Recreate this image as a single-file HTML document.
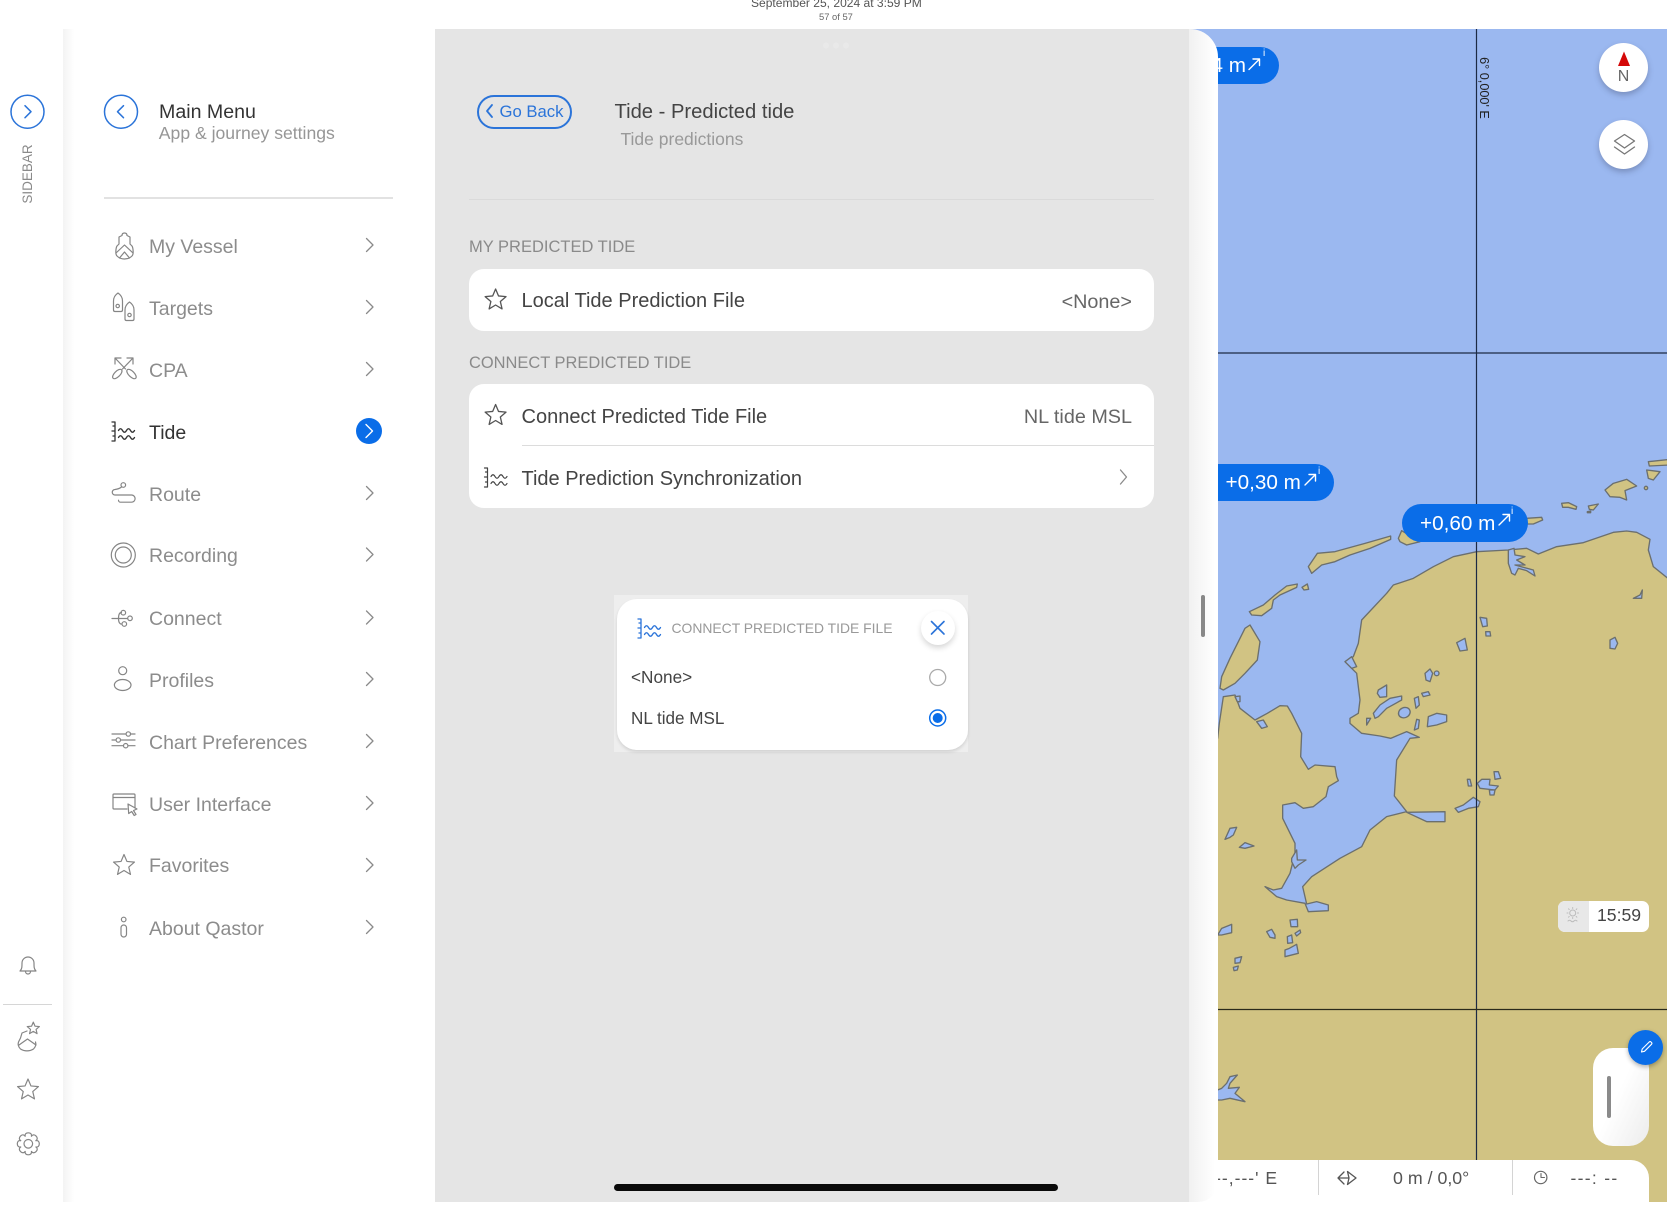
<!DOCTYPE html>
<html><head><meta charset="utf-8"><title>Tide - Predicted tide</title>
<style>
html,body{margin:0;padding:0;background:#fff}
body{position:relative;width:1667px;height:1205px;overflow:hidden;font-family:"Liberation Sans",sans-serif}
#page{position:absolute;left:0;top:0;width:1667px;height:1205px;overflow:hidden;filter:blur(.35px)}
div{box-sizing:border-box}
.a{position:absolute}
.t{position:absolute;white-space:nowrap;height:24px;line-height:24px}
.m{left:149px;font-size:19.5px;color:#8c8c8c}
.h{color:#444;font-size:20px;left:521.5px}
.s{font-size:16.5px;color:#8a8a8a;left:469px}
.v{font-size:19.8px;color:#666;right:535px}
.pill{position:absolute;background:#0a6de8;border-radius:19px;height:37.5px}
.pt{position:absolute;color:#fff;font-size:20.7px;white-space:nowrap;line-height:24px;height:24px}
.st{position:absolute;color:#555;font-size:17.5px;white-space:nowrap;line-height:24px;height:24px}
.pi{position:absolute;color:#fff;font-size:10px;line-height:10px}
</style></head><body><div id="page">

<div class="t" style="left:751px;top:-9px;font-size:12.05px;color:#555">September 25, 2024 at 3:59 PM</div>
<div class="t" style="left:819px;top:5px;font-size:9.4px;color:#666">57 of 57</div>

<!-- Sidebar shadow -->
<div class="a" style="left:63px;top:29px;width:11px;height:1173px;background:linear-gradient(90deg,#f3f3f3,#fff)"></div>

<div class="t" style="left:-3px;top:162px;width:62px;text-align:center;font-size:13.5px;color:#8a8a8a;transform:rotate(-90deg)">SIDEBAR</div>
<div class="a" style="left:3px;top:1003.5px;width:49px;height:1px;background:#d6d6d6"></div>

<!-- Menu -->
<div class="a" style="left:104px;top:197px;width:289px;height:1.5px;background:#e2e2e2"></div>
<div class="t" style="left:159px;top:100px;font-size:19.6px;color:#333">Main Menu</div>
<div class="t" style="left:158.8px;top:121px;font-size:17.6px;color:#969696">App &amp; journey settings</div>
<div class="t m" style="top:235px">My Vessel</div>
<div class="t m" style="top:297px">Targets</div>
<div class="t m" style="top:358.5px">CPA</div>
<div class="t m" style="top:420.5px;color:#333">Tide</div>
<div class="t m" style="top:482.5px">Route</div>
<div class="t m" style="top:544px">Recording</div>
<div class="t m" style="top:606.5px">Connect</div>
<div class="t m" style="top:668.5px">Profiles</div>
<div class="t m" style="top:730.5px">Chart Preferences</div>
<div class="t m" style="top:792.5px">User Interface</div>
<div class="t m" style="top:854px">Favorites</div>
<div class="t m" style="top:916.5px">About Qastor</div>

<!-- Map -->
<div class="a" style="left:1189px;top:29px;width:478px;height:1173px;overflow:hidden;background:#9bb8f0">
<svg class="a" style="left:-1189px;top:-29px" width="1667" height="1205" viewBox="0 0 1667 1205">
<g transform="translate(1180 500) scale(.33333)" stroke="#6b6f6e" stroke-width="4" stroke-linejoin="round">
<path fill="#d1c383" d="M0 720L113 715L118 670L130 590L165 585L180 625L225 660L262 640L300 617L322 618L335 640L365 700L362 770L385 808L405 795L465 800L470 830L475 842L445 860L438 890L400 920L370 925L345 908L308 915L308 955L345 1030L345 1060L330 1120L305 1165L280 1170L255 1160L290 1190L320 1200L375 1210L385 1235L445 1232L445 1215L410 1205L380 1212L368 1160L395 1130L480 1075L545 1040L570 990L620 950L680 935L643 888L650 780L690 715L718 712L680 695L632 715L600 708L545 700L510 670L510 655L535 640L540 600L530 520L495 485L520 470L535 430L545 360L620 280L640 255L700 235L760 200L820 170L890 155L985 150L1040 145L1075 162L1130 140L1210 128L1300 97L1340 93L1370 97L1410 118L1405 150L1420 200L1470 240L1470 2200L0 2200Z"/>
<path fill="#d1c383" d="M120 565L125 530L150 475L195 385L210 375L240 425L232 480L195 520L165 550L130 570Z"/>
<path fill="#d1c383" d="M208 335L250 315L285 285L320 258L352 252L350 262L300 285L280 300L275 325L245 347L215 345Z"/>
<path fill="#d1c383" d="M385 200L412 160L465 155L555 130L632 108L632 118L570 145L510 165L465 185L425 195L395 220Z"/>
<path fill="#d1c383" d="M366 262L382 252L386 268L372 270Z"/>
<path fill="#d1c383" d="M655 115L665 92L720 125L680 135L660 125Z"/>
<path fill="#d1c383" d="M1040 55L1085 52L1088 60L1060 72L1040 72Z"/>
<g fill="#9bb8f0">
<path d="M900 352L920 355L922 378L908 380Z"/><path d="M917 395L930 395L932 408L918 408Z"/>
<path d="M830 428L855 415L862 450L840 453Z"/><path d="M1290 420L1305 412L1313 430L1305 447L1290 445Z"/>
<path d="M1360 295L1380 285L1387 270L1385 295Z"/>
<path d="M735 520L750 507L758 520L750 545L738 540Z"/><circle cx="770" cy="520" r="7"/>
<path d="M595 570L620 555L620 590L600 592L592 580Z"/>
<path d="M580 640L600 615L630 595L665 588L665 600L620 625L595 650L585 655Z"/>
<ellipse cx="673" cy="638" rx="18" ry="15" transform="rotate(-25 673 638)"/>
<path d="M703 595L715 590L718 615L708 625Z"/><path d="M725 580L745 575L750 585L730 590Z"/>
<path d="M745 650L770 640L800 645L800 665L770 675L742 680Z"/><path d="M710 658L718 660L715 685L703 690Z"/>
<path d="M560 655L572 655L560 675Z"/>
<path d="M862 838L870 838L875 858L865 858Z"/><path d="M892 850L905 838L930 838L928 855L955 858L945 870L900 865Z"/>
<path d="M928 870L945 870L942 885L930 885Z"/><path d="M942 815L955 815L962 835L945 838Z"/>
<path d="M825 925L850 915L880 892L900 905L895 920L865 925L835 937Z"/>
<path d="M985 150L1002 145L1005 165L1035 170L1010 180L1035 195L1005 195L1060 210L1065 228L1040 212L1015 205L1005 225L995 220L985 190Z"/>
<path d="M495 485L515 470L530 500L515 505Z"/>
<path d="M680 937L795 935L795 965L740 965Z"/>
<path d="M230 665L250 660L262 680L245 685Z"/><path d="M165 590L180 588L180 605L172 605Z"/>
<path d="M135 1018L150 985L170 982L160 1005L150 1012Z"/><path d="M178 1042L195 1028L222 1038L195 1045Z"/>
<path d="M335 1075L350 1050L352 1080L378 1080L355 1095L345 1105L335 1085Z"/>
</g>
</g>
<g transform="translate(1180 880) scale(.33333)" stroke="#6b6f6e" stroke-width="4" stroke-linejoin="round" fill="#9bb8f0">
<path d="M113 165L125 145L155 133L155 158L125 165Z"/><path d="M260 155L275 148L285 165L285 175L270 172Z"/>
<path d="M330 120L352 118L353 140L333 140Z"/><path d="M345 160L360 150L362 158L350 168Z"/>
<path d="M322 170L335 165L338 188L323 190Z"/><path d="M315 210L328 205L350 193L355 220L315 230Z"/>
<path d="M165 235L185 230L180 248L165 250Z"/><path d="M160 262L175 258L172 270L162 272Z"/>
<path d="M100 635L125 625L140 610L150 590L172 585L150 610L145 625L178 622L165 640L195 665L150 655L125 660L100 660Z"/>
</g>
<g transform="translate(1180 20) scale(.33333)" stroke="#6b6f6e" stroke-width="4" stroke-linejoin="round" fill="#d1c383">
<path d="M1145 1450L1165 1448L1190 1460L1188 1468L1165 1462L1148 1462Z"/>
<path d="M1225 1458L1255 1452L1240 1470L1228 1468Z"/><path d="M1222 1475L1232 1473L1232 1478L1222 1478Z"/>
<path d="M1275 1410L1300 1390L1340 1378L1370 1398L1335 1412L1340 1440L1320 1432L1290 1430Z"/>
<circle cx="1398" cy="1404" r="5"/>
<path d="M1400 1350L1440 1355L1420 1380L1405 1375Z"/>
<path d="M1405 1325L1470 1318L1470 1335L1408 1338Z"/>
</g>
<g stroke="#1d2a44" stroke-width="1.2">
<path d="M1476.5 29V1160M1189 353H1667"/>
<path d="M1189 1009.5H1667" stroke="#2a2a1a"/>
</g>
</svg>
<div class="t" style="left:263.5px;top:47px;width:62px;text-align:center;font-size:12.7px;color:#222;transform:rotate(90deg)">6° 0,000' E</div>

<div class="pill" style="left:0;top:17.5px;width:90px"></div>
<div class="pt" style="right:421px;top:24.5px">4 m</div>
<div class="pi" style="left:74px;top:20px">i</div>
<div class="pill" style="left:0;top:434.5px;width:145px"></div>
<div class="pt" style="left:36.5px;top:441.5px">+0,30 m</div>
<div class="pi" style="left:129px;top:438px">i</div>
<div class="pill" style="left:213px;top:475px;width:126px"></div>
<div class="pt" style="left:231px;top:483px">+0,60 m</div>
<div class="pi" style="left:322px;top:478px">i</div>

<!-- compass / layers -->
<div class="a" style="left:410px;top:13.5px;width:49px;height:49px;border-radius:50%;background:#fff;box-shadow:0 3px 6px rgba(60,70,100,.35)"></div>
<div class="t" style="left:410px;top:36px;width:49px;text-align:center;font-size:16px;color:#666">N</div>
<div class="a" style="left:410px;top:91px;width:49px;height:49px;border-radius:50%;background:#fff;box-shadow:0 3px 6px rgba(60,70,100,.35)"></div>

<!-- time -->
<div class="a" style="left:369px;top:871.5px;width:91px;height:31.5px;border-radius:7px;background:#fff;overflow:hidden"><div class="a" style="left:0;top:0;width:31px;height:32px;background:#e8e8e8"></div></div>
<div class="t" style="left:408px;top:874px;font-size:17.6px;color:#444">15:59</div>

<!-- drawer -->
<div class="a" style="left:403.5px;top:1018.5px;width:56.5px;height:98px;border-radius:20px;background:linear-gradient(115deg,#fff 45%,#ececec)"></div>
<div class="a" style="left:417.7px;top:1047px;width:4.5px;height:42px;border-radius:2px;background:#8a8a8a"></div>
<div class="a" style="left:438.5px;top:1001px;width:35px;height:35px;border-radius:50%;background:#0a6de8;box-shadow:0 2px 5px rgba(0,0,0,.3)"></div>

<!-- status -->
<div class="a" style="left:0;top:1131px;width:459.7px;height:42px;background:#fff;border-top-right-radius:18px"></div>
<div class="a" style="left:129px;top:1131px;width:1px;height:35px;background:#d4d4d4"></div>
<div class="a" style="left:323px;top:1131px;width:1px;height:35px;background:#d4d4d4"></div>
<div class="st" style="right:389px;top:1136.5px;letter-spacing:1px">--,---' E</div>
<div class="st" style="left:204px;top:1136.5px;font-size:17.8px">0 m / 0,0°</div>
<div class="st" style="left:381.500px;top:1136.5px;letter-spacing:1.3px">---: --</div>
</div>

<!-- Gray panel -->
<div class="a" style="left:435px;top:29px;width:754px;height:1173px;background:#e5e5e5"></div>
<!-- band -->
<div class="a" style="left:1189px;top:29px;width:28.5px;height:1173px;background:linear-gradient(90deg,#f1f1f1,#fff 90%);border-top-right-radius:28px;border-bottom-right-radius:20px"></div>
<div class="a" style="left:1200.5px;top:595px;width:4.5px;height:42px;border-radius:2px;background:#888"></div>

<div class="a" style="left:469px;top:198.5px;width:685px;height:1.5px;background:#dadada"></div>
<div class="a" style="left:476.5px;top:95px;width:95px;height:34px;border:2px solid #2b74d9;border-radius:17px"></div>
<div class="t" style="left:499.5px;top:99.5px;font-size:16.7px;color:#2b74d9">Go Back</div>
<div class="t" style="left:614.5px;top:99.5px;font-size:20.2px;color:#444">Tide - Predicted tide</div>
<div class="t" style="left:620.5px;top:127px;font-size:17.5px;color:#999">Tide predictions</div>
<div class="t s" style="top:235px">MY PREDICTED TIDE</div>
<div class="t s" style="top:350.5px;font-size:16.45px">CONNECT PREDICTED TIDE</div>

<div class="a" style="left:469px;top:268.5px;width:685px;height:62px;border-radius:15px;background:#fff"></div>
<div class="t h" style="top:289px">Local Tide Prediction File</div>
<div class="t v" style="top:289.5px">&lt;None&gt;</div>

<div class="a" style="left:469px;top:384px;width:685px;height:123.5px;border-radius:15px;background:#fff"></div>
<div class="a" style="left:521.5px;top:444.5px;width:632.5px;height:1.5px;background:#dcdcdc"></div>
<div class="t h" style="top:404.5px">Connect Predicted Tide File</div>
<div class="t v" style="top:405px">NL tide MSL</div>
<div class="t h" style="top:466.5px">Tide Prediction Synchronization</div>

<!-- popup -->
<div class="a" style="left:614px;top:595px;width:354px;height:157px;background:#eeeeee"></div>
<div class="a" style="left:616.5px;top:599px;width:351.5px;height:151px;border-radius:20px;background:#fff;box-shadow:0 2px 3px rgba(0,0,0,.12)"></div>
<div class="t" style="left:671.5px;top:616px;font-size:13.9px;color:#999">CONNECT PREDICTED TIDE FILE</div>
<div class="a" style="left:920.5px;top:611px;width:34px;height:34px;border-radius:50%;background:#fff;box-shadow:0 3px 6px rgba(0,0,0,.16)"></div>
<div class="t" style="left:631px;top:665px;font-size:17.2px;color:#444">&lt;None&gt;</div>
<div class="t" style="left:631px;top:707px;font-size:17.1px;color:#444">NL tide MSL</div>

<div class="a" style="left:613.5px;top:1183.5px;width:444.5px;height:7.5px;border-radius:4px;background:#0a0a0a"></div>

<!-- Icons overlay -->
<svg class="a" style="left:0;top:0;pointer-events:none" width="1667" height="1205" viewBox="0 0 1667 1205" fill="none" stroke-linecap="round" stroke-linejoin="round">
<defs>
<path id="star" d="M0-11L2.94-4.05L10.46-3.4L4.76 1.55L6.47 8.9L0 5L-6.47 8.9L-4.76 1.55L-10.46-3.4L-2.94-4.05Z"/>
<g id="tide"><path d="M115 422v19M112 422h3M113 426h2M112 431h3M113 436h2M112 441h3"/><path d="M118.500 430.500q2-3.500 4 0t4 0t4 0t4 0M118.500 437.500q2-3.500 4 0t4 0t4 0t4 0"/></g>
<path id="chev" d="M0-6.500L6.500 0L0 6.500"/>
<path id="tooth" d="M7.67-3.18C9.50-3.500 11-2.500 11 0S9.50 3.500 7.67 3.18"/>
</defs>
<g fill="#e9e9e9" stroke="none"><circle cx="826" cy="45.500" r="3"/><circle cx="836" cy="45.500" r="3"/><circle cx="846" cy="45.500" r="3"/></g>

<g stroke="#2b74d9" stroke-width="1.500">
<circle cx="27.500" cy="111.700" r="16.500"/><path d="M25 105.700l6 6-6 6"/>
<circle cx="121" cy="111.700" r="16.500"/><path d="M123.500 105.700l-6 6 6 6"/>
</g>

<!-- menu icons -->
<g stroke="#858585" stroke-width="1.200">
<path d="M124.500 233c-1.500 0-2.500 1-2.500 2.500l-3 1.500v7l-2 2c-1 1.500-2 8 0 10 4 4 11 4 15 0 2-2 1-8.500 0-10l-2-2v-7l-3-1.500c0-1.500-1-2.500-2.500-2.500z"/><path d="M116 253l8.500-8 8.500 8M119.500 258l5-6 5 6"/>
<path d="M118 293c-3 2-4.500 5-4.500 8v9c0 1 .5 1.500 1.500 1.500h6c1 0 1.500-.5 1.500-1.500v-9c0-3-1.500-6-4.500-8z"/><circle cx="117.700" cy="306" r="1.700"/>
<path d="M129.500 302c-3 2-4.500 5-4.500 8v9c0 1 .5 1.500 1.500 1.500h6c1 0 1.500-.5 1.500-1.500v-9c0-3-1.500-6-4.500-8z"/><circle cx="129.500" cy="315" r="1.700"/>
<path d="M115 358l10.500 11M133 358l-10.500 11M115 364v-6h6M127 358h6v6"/>
<ellipse cx="117.300" cy="374" rx="6" ry="2.800" transform="rotate(-45 117.300 374)"/><ellipse cx="131.500" cy="374" rx="6" ry="2.800" transform="rotate(45 131.500 374)"/>
<circle cx="123.300" cy="485" r="2.300"/><path d="M121.500 487Q119 489 115 489.500a2.700 2.700 0 0 0 0 5.500H131.500a3.600 3.600 0 0 1 0 7.200H120.500a2 2 0 0 1-2-2"/>
<circle cx="123.300" cy="555" r="12"/><circle cx="123.300" cy="555" r="8"/>
<path d="M112 618.500h15.500M118.500 618.500c0-4 1-6 3-6M118.500 618.500c0 4 1.500 6 3.500 5.500"/><circle cx="123.300" cy="612.700" r="2.300"/><circle cx="124.300" cy="624" r="2.300"/><circle cx="130" cy="618.300" r="2.300"/>
<circle cx="122.700" cy="670.700" r="4"/><ellipse cx="122.700" cy="685" rx="8.300" ry="5.500"/>
<path d="M112 734h14M130.500 734h4.500M112 740h4M120.500 740h14.500M112 745.700h11.500M128 745.700h7"/><circle cx="128.300" cy="734" r="2.200"/><circle cx="118.300" cy="740" r="2.200"/><circle cx="125.700" cy="745.700" r="2.200"/>
<path d="M135 808v-13a1 1 0 0 0-1-1h-20a1 1 0 0 0-1 1v13a1 1 0 0 0 1 1h13M113 797.500h22"/><path d="M128 804l9 5-3.500 1.500 2.500 4-1.800 1-2.500-4-3 2z"/>
<use href="#star" x="124" y="865.500"/>
<circle cx="123.700" cy="919.500" r="2.300"/><rect x="121" y="925" width="5.500" height="12" rx="2.700"/>
<use href="#star" x="28" y="1090"/>
<path d="M20 971c2-2 2-4 2-8a6 6 0 0 1 12 0c0 4 0 6 2 8zM25.500 971.500a2.500 2.500 0 0 0 5 0"/>
<path d="M27 1031l-5 2-1.500 5-2 4c-1 3 0 5 2 7 4 2.500 9 2.500 13 0 2-2 3-4 2-7M19 1045l8.500-6 8.500 6"/>
<use href="#star" transform="translate(33.300 1028.500) scale(.58)" stroke-width="2"/>
<g transform="translate(28.300 1143.800)"><circle r="4.300"/><use href="#tooth"/><use href="#tooth" transform="rotate(45)"/><use href="#tooth" transform="rotate(90)"/><use href="#tooth" transform="rotate(135)"/><use href="#tooth" transform="rotate(180)"/><use href="#tooth" transform="rotate(225)"/><use href="#tooth" transform="rotate(270)"/><use href="#tooth" transform="rotate(315)"/></g>
</g>
<use href="#tide" stroke="#333" stroke-width="1.300"/>

<g stroke="#8a8a8a" stroke-width="1.300">
<use href="#chev" x="366.500" y="245"/><use href="#chev" x="366.500" y="307"/><use href="#chev" x="366.500" y="369"/>
<use href="#chev" x="366.500" y="493"/><use href="#chev" x="366.500" y="554.500"/><use href="#chev" x="366.500" y="617.500"/>
<use href="#chev" x="366.500" y="679"/><use href="#chev" x="366.500" y="741"/><use href="#chev" x="366.500" y="803"/>
<use href="#chev" x="366.500" y="865"/><use href="#chev" x="366.500" y="927"/>
<path d="M1120.500 470l6 7-6 7"/>
</g>
<circle cx="369" cy="431" r="13" fill="#0a6de8"/><use href="#chev" x="366" y="431" stroke="#fff" stroke-width="1.400"/>

<path d="M492 105l-5 6 5 6" stroke="#2b74d9" stroke-width="1.800"/>
<g stroke="#555" stroke-width="1.300"><use href="#star" x="495.600" y="300"/><use href="#star" x="495.600" y="415.500"/></g>
<use href="#tide" transform="translate(372.500 46)" stroke="#444" stroke-width="1.200"/>

<!-- popup icons -->
<use href="#tide" transform="translate(526 197)" stroke="#2b74d9" stroke-width="1.300"/>
<path d="M931.500 621.500l12.500 12.500M944 621.500l-12.500 12.500" stroke="#2b74d9" stroke-width="1.600"/>
<circle cx="937.700" cy="677.500" r="8" stroke="#aaa" stroke-width="1.300"/>
<circle cx="937.700" cy="718" r="8" stroke="#0a6de8" stroke-width="1.500"/><circle cx="937.700" cy="718" r="5" fill="#0a6de8"/>

<!-- map icons -->
<g stroke="#fff" stroke-width="1.400">
<path d="M1249 69.500l10-10M1253 59h6.500v6.500"/><path d="M1305 485l10-10M1309 474.500h6.500v6.500"/><path d="M1499 525l10-10M1503 514.500h6.500v6.500"/>
</g>
<path d="M1624 51.500l6 14.500h-12z" fill="#d40808"/>
<path d="M1624.500 134.500l10 6.500-10 7-10-7zM1614.500 147l10 7 10-7" stroke="#777" stroke-width="1.300"/>
<g stroke="#bbb" stroke-width="1"><circle cx="1572.700" cy="913" r="3"/><path d="M1572.700 907.500v1M1572.700 917.500v1M1567 913h1M1577.500 913h1M1568.500 908.800l.7.7M1576.200 916.500l.7.7M1568.500 917.200l.7-.7M1576.200 909.500l.7-.7M1568 921q1.500-1.500 3 0t3 0t3 0"/></g>
<path d="M1641.500 1052l.7-3 7-7c.5-.5 1.300-.5 1.800 0l.5.5c.5.5.5 1.300 0 1.800l-7 7z" stroke="#fff" stroke-width="1.100"/>
<path d="M1344 1172l-6 6 6 6M1338 1178h10M1347.500 1171.500l8.500 6.500-8.500 6.500 1.500-6.500z" stroke="#555" stroke-width="1.300"/>
<circle cx="1540.700" cy="1177.500" r="6.200" stroke="#666" stroke-width="1.200"/><path d="M1541 1173.500v4h3.500" stroke="#666" stroke-width="1.100"/>
</svg>
</div></body></html>
